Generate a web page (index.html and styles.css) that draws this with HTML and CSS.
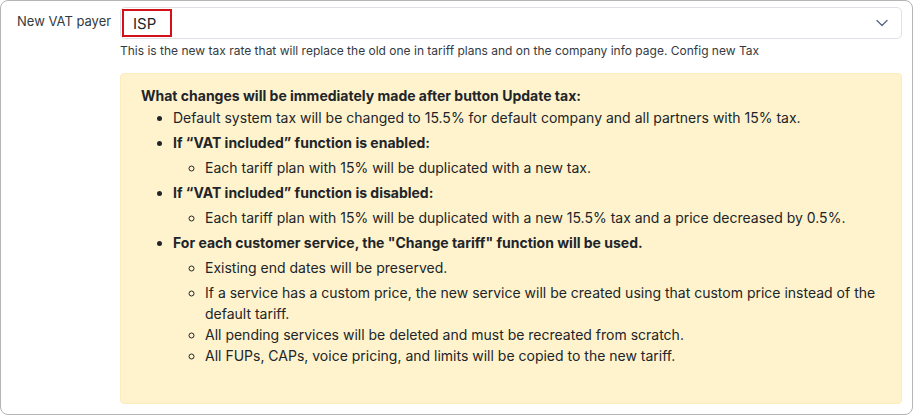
FILE: index.html
```html
<!DOCTYPE html>
<html lang="en">
<head>
    <meta charset="UTF-8">
    <meta name="viewport" content="width=device-width, initial-scale=1.0">
    <title>Update tax</title>
    <link rel="stylesheet" href="styles.css">
</head>
<body>
    <div class="panel">
        <div class="form-row">
            <label class="form-label" for="vatPayer">New VAT payer</label>
            <div class="form-field">
                <div class="select-wrap">
                    <select id="vatPayer" class="form-select">
                        <option value="isp">ISP</option>
                    </select>
                    <svg class="chevron" width="12" height="8" viewBox="0 0 12 8">
                        <path d="M1 1.5 L6 6.5 L11 1.5" fill="none" stroke="#5b6b86" stroke-width="1.4" stroke-linecap="round" stroke-linejoin="round"/>
                    </svg>
                    <span class="highlight"></span>
                </div>
                <div class="help-text">This is the new tax rate that will replace the old one in tariff plans and on the company info page. Config new Tax</div>

                <div class="notice">
                    <div class="notice-title">What changes will be immediately made after button Update tax:</div>
                    <ul class="changes">
                        <li>Default system tax will be changed to 15.5% for default company and all partners with 15% tax.</li>
                        <li>
                            <b>If “VAT included” function is enabled:</b>
                            <ul>
                                <li>Each tariff plan with 15% will be duplicated with a new tax.</li>
                            </ul>
                        </li>
                        <li>
                            <b>If “VAT included” function is disabled:</b>
                            <ul>
                                <li>Each tariff plan with 15% will be duplicated with a new 15.5% tax and a price decreased by 0.5%.</li>
                            </ul>
                        </li>
                        <li>
                            <b>For each customer service, the "Change tariff" function will be used.</b>
                            <ul>
                                <li>Existing end dates will be preserved.</li>
                                <li>If a service has a custom price, the new service will be created using that custom price instead of the default tariff.</li>
                                <li class="tight">All pending services will be deleted and must be recreated from scratch.</li>
                                <li class="tight">All FUPs, CAPs, voice pricing, and limits will be copied to the new tariff.</li>
                            </ul>
                        </li>
                    </ul>
                </div>
            </div>
        </div>
    </div>
</body>
</html>
```

FILE: styles.css
```css
body {
    margin: 0;
    font-family: Inter, 'Noto Sans', Arial, sans-serif;
    color: #212529;
    background-color: #fff;
}

.panel {
    width: 913px;
    height: 415px;
    box-sizing: border-box;
    border: 1px solid #b5b5b5;
    border-radius: 8px;
    padding: 6px 10px 0 16px;
    background-color: #fff;
}

.form-row {
    display: grid;
    grid-template-columns: 103px 1fr;
}

.form-label {
    font-size: 13px;
    color: #343a40;
    padding-top: 6px;
}

.select-wrap {
    position: relative;
}

.form-select {
    display: block;
    width: 100%;
    height: 32px;
    padding: 0 32px 0 12px;
    border: 1px solid #dee2e6;
    border-radius: 5px;
    background-color: #fff;
    font-family: inherit;
    font-size: 15px;
    color: #212529;
    appearance: none;
    -webkit-appearance: none;
}

.chevron {
    position: absolute;
    right: 14px;
    top: 12px;
}

.highlight {
    position: absolute;
    left: 2px;
    top: 2px;
    width: 50px;
    height: 28px;
    box-sizing: border-box;
    border: 2px solid #d3111b;
    pointer-events: none;
}

.help-text {
    font-size: 12px;
    line-height: 18px;
    color: #343a40;
    margin-top: 3px;
}

.notice {
    margin-top: 13px;
    height: 331px;
    box-sizing: border-box;
    padding: 11px 20px;
    background-color: #fff3cd;
    border: 1px solid #fbecc0;
    border-radius: 4px;
    font-size: 14px;
    line-height: 21px;
    color: #212529;
}

.notice-title {
    font-weight: bold;
}

.changes {
    margin: 0;
    padding-left: 32px;
}

.changes li {
    margin-top: 4px;
}

.changes > li:first-child {
    margin-top: 1px;
}

.changes ul {
    margin: 0;
    padding-left: 32px;
    list-style-type: circle;
}

.changes li.tight {
    margin-top: 0;
}
```
